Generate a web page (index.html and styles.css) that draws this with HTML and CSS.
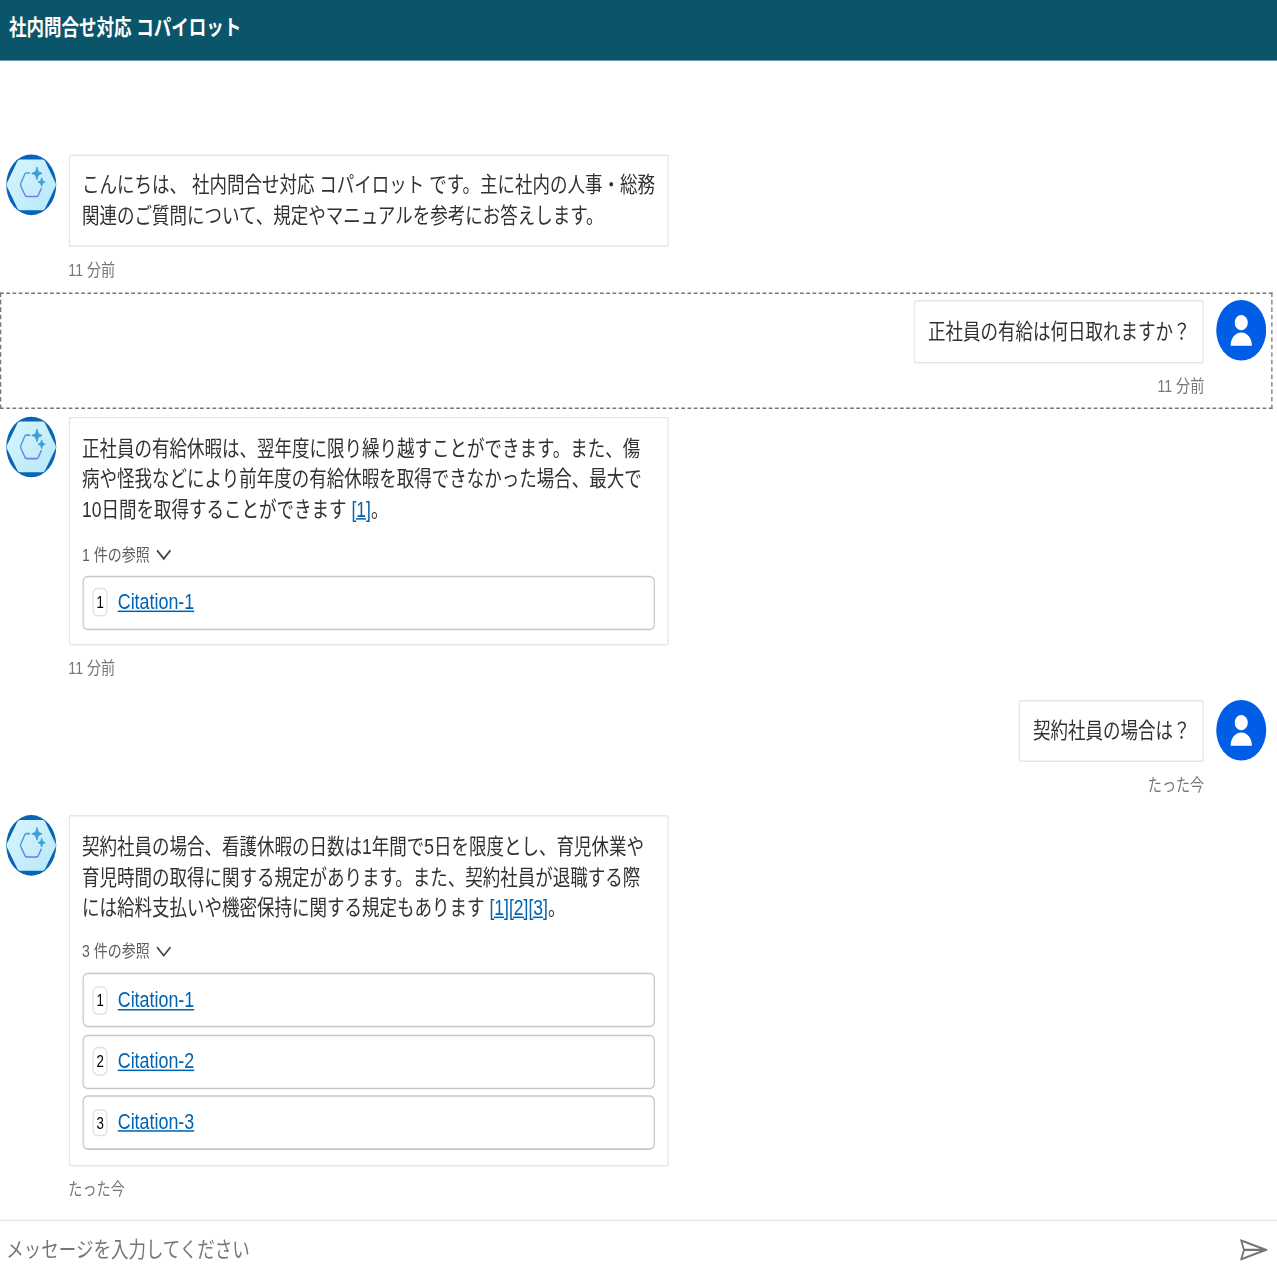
FILE: index.html
```html
<!DOCTYPE html>
<html lang="ja">

<head>
    <meta charset="UTF-8">
    <meta name="viewport" content="width=device-width, initial-scale=1.0">
    <title>社内問合せ対応 コパイロット</title>
    <link rel="stylesheet" href="styles.css">
</head>

<body>

    <!-- shared icons -->
    <svg class="icon-defs" width="0" height="0">
        <defs>
            <linearGradient id="hex-fill" x1="0" y1="0" x2="1" y2="1">
                <stop offset="0" stop-color="#d9f6fd" />
                <stop offset="1" stop-color="#b5e8f9" />
            </linearGradient>
            <linearGradient id="hex-line" gradientUnits="userSpaceOnUse" x1="18" y1="12" x2="22" y2="28">
                <stop offset="0" stop-color="#3fa3d9" />
                <stop offset="1" stop-color="#7a78e0" />
            </linearGradient>
            <symbol id="bot" viewBox="0 0 40 40" overflow="visible">
                <circle cx="20" cy="20" r="20" fill="#0764b7" />
                <path d="M11 3.2h18q1.4 0 2 1.1L39.5 19q.5 1 0 2L31 35.6q-.6 1.1-2 1.1H11q-1.4 0-2-1.1L.5 21q-.5-1 0-2L9 4.3q.6-1.1 2-1.1z" fill="url(#hex-fill)" />
                <path d="M19 12.2h-3q-.8 0-1.2.8L11.7 19q-.5 1 0 2l3.4 6q.4.7 1.2.7h8q.9 0 1.3-.8l2.6-4.7" fill="none" stroke="url(#hex-line)" stroke-width="1.1" />
                <path d="M24.6 8.2l1.1 3.1 3 1.1-3 1.2-1.1 3-1.2-3-3-1.2 3-1.1zM28.3 15.3l.8 2.1 2.1.8-2.1.8-.8 2.1-.8-2.1-2.1-.8 2.1-.8z" fill="#3c9fd6" stroke="#3c9fd6" stroke-width=".6" />
            </symbol>
            <symbol id="user" viewBox="0 0 40 40" overflow="visible">
                <circle cx="20" cy="20" r="20" fill="#005ee6" />
                <ellipse cx="20" cy="15" rx="5.2" ry="5" fill="#fff" />
                <path d="M11.5 30.2c0-5 3.7-8.7 8.5-8.7s8.5 3.7 8.5 8.7z" fill="#fff" />
            </symbol>
            <symbol id="chevron" viewBox="0 0 12 8">
                <path d="M.6 1.2L6 6.8l5.4-5.6" fill="none" stroke="#484644" stroke-width="1.3" />
            </symbol>
        </defs>
    </svg>

    <div class="webchat">
        <header class="header">社内問合せ対応 コパイロット</header>

        <main class="transcript">
            <div class="message">
                <svg class="avatar"><use href="#bot" /></svg>
                <div class="content">
                    <div class="bubble wide">
                        <p>こんにちは、 社内問合せ対応 コパイロット です。主に社内の人事・総務<br>関連のご質問について、規定やマニュアルを参考にお答えします。</p>
                    </div>
                    <div class="time">11 分前</div>
                </div>
            </div>

            <div class="message from-user focused">
                <svg class="avatar"><use href="#user" /></svg>
                <div class="content">
                    <div class="bubble">
                        <p>正社員の有給は何日取れますか？</p>
                    </div>
                    <div class="time">11 分前</div>
                </div>
            </div>

            <div class="message">
                <svg class="avatar"><use href="#bot" /></svg>
                <div class="content">
                    <div class="bubble wide">
                        <p>正社員の有給休暇は、翌年度に限り繰り越すことができます。また、傷<br>病や怪我などにより前年度の有給休暇を取得できなかった場合、最大で<br>10日間を取得することができます <a href="#">[1]</a>。</p>
                        <div class="references">1 件の参照 <svg class="chevron"><use href="#chevron" /></svg></div>
                        <div class="citations">
                            <div class="citation"><span class="badge">1</span><a href="#">Citation-1</a></div>
                        </div>
                    </div>
                    <div class="time">11 分前</div>
                </div>
            </div>

            <div class="message from-user">
                <svg class="avatar"><use href="#user" /></svg>
                <div class="content">
                    <div class="bubble">
                        <p>契約社員の場合は？</p>
                    </div>
                    <div class="time">たった今</div>
                </div>
            </div>

            <div class="message">
                <svg class="avatar"><use href="#bot" /></svg>
                <div class="content">
                    <div class="bubble wide">
                        <p>契約社員の場合、看護休暇の日数は1年間で5日を限度とし、育児休業や<br>育児時間の取得に関する規定があります。また、契約社員が退職する際<br>には給料支払いや機密保持に関する規定もあります <a href="#">[1]</a><a href="#">[2]</a><a href="#">[3]</a>。</p>
                        <div class="references">3 件の参照 <svg class="chevron"><use href="#chevron" /></svg></div>
                        <div class="citations">
                            <div class="citation"><span class="badge">1</span><a href="#">Citation-1</a></div>
                            <div class="citation"><span class="badge">2</span><a href="#">Citation-2</a></div>
                            <div class="citation"><span class="badge">3</span><a href="#">Citation-3</a></div>
                        </div>
                    </div>
                    <div class="time">たった今</div>
                </div>
            </div>
        </main>

        <footer class="send-box">
            <span class="placeholder">メッセージを入力してください</span>
            <svg class="send" viewBox="0 0 22 14" preserveAspectRatio="none">
                <path d="M1 .8L20.8 7 1 13.2 3.2 7zM3.2 7h17" fill="none" stroke="#767676" stroke-width="1.4" />
            </svg>
        </footer>
    </div>

</body>

</html>
```
FILE: styles.css
```css
html,
body {
    height: 100%;
}

body {
    margin: 0;
    min-height: 1277px;
    background-color: #fff;
    font-family: "Liberation Sans", "Noto Sans CJK JP", sans-serif;
}

.icon-defs {
    position: absolute;
}

.webchat {
    display: flex;
    flex-direction: column;
    width: 1021.6px;
    height: 842.9px;
    font-size: 14px;
    line-height: 20px;
    color: #323130;
    transform: scale(1.25, 1.515);
    transform-origin: 0 0;
}

.header {
    flex: none;
    box-sizing: border-box;
    height: 40.2px;
    padding: 8px 7.2px;
    background-color: #0b556a;
    color: #fff;
    font-weight: bold;
}

.transcript {
    flex: 1;
    min-height: 0;
    padding-top: 56.8px;
    padding-right: 3.2px;
}

.message {
    display: flex;
    align-items: flex-start;
    gap: 10px;
    padding: 5px 5px 0 4.7px;
    margin-bottom: 1.2px;
}

.from-user {
    flex-direction: row-reverse;
}

.focused {
    padding: 4px 4px 0 3.7px;
    border: 1px dashed #767676;
    margin-bottom: 0.5px;
}

.focused .time {
    margin-bottom: 3.9px;
}

.avatar {
    flex: none;
    width: 40px;
    height: 40px;
    overflow: visible;
}

.bubble {
    box-sizing: border-box;
    padding: 9.5px 10px 9.8px;
    border: 1px solid #e6e6e6;
    border-radius: 2px;
    white-space: nowrap;
}

.bubble.wide {
    width: 480px;
}

.bubble p {
    margin: 0;
}

a {
    color: #0063b1;
}

.time {
    padding-top: 5px;
    margin-bottom: 4px;
    font-size: 11.3px;
    color: #767676;
}

.from-user .time {
    text-align: right;
}

.references {
    display: flex;
    align-items: center;
    gap: 5px;
    margin-top: 9.9px;
    font-size: 11.2px;
    color: #605e5c;
}

.chevron {
    width: 12px;
    height: 8px;
}

.citations {
    display: flex;
    flex-direction: column;
    gap: 4.2px;
    margin-top: 4px;
}

.citation {
    display: flex;
    align-items: center;
    gap: 8px;
    box-sizing: border-box;
    height: 36px;
    padding-left: 7.5px;
    border: 1px solid #c8c8c8;
    border-radius: 4px;
}

.citation a {
    font-size: 14.3px;
    line-height: 18px;
    margin-bottom: 1px;
}

.badge {
    box-sizing: border-box;
    width: 12px;
    height: 18.4px;
    border: 1px solid #e1e1e1;
    border-radius: 4px;
    font-size: 10.6px;
    line-height: 16.4px;
    text-align: center;
    color: #000;
}

.send-box {
    display: flex;
    flex: none;
    align-items: center;
    justify-content: space-between;
    box-sizing: border-box;
    height: 37.6px;
    padding: 0.4px 8px 0 5px;
    border-top: 1px solid #e6e6e6;
    color: #767676;
}

.send {
    width: 22px;
    height: 14px;
}
```
